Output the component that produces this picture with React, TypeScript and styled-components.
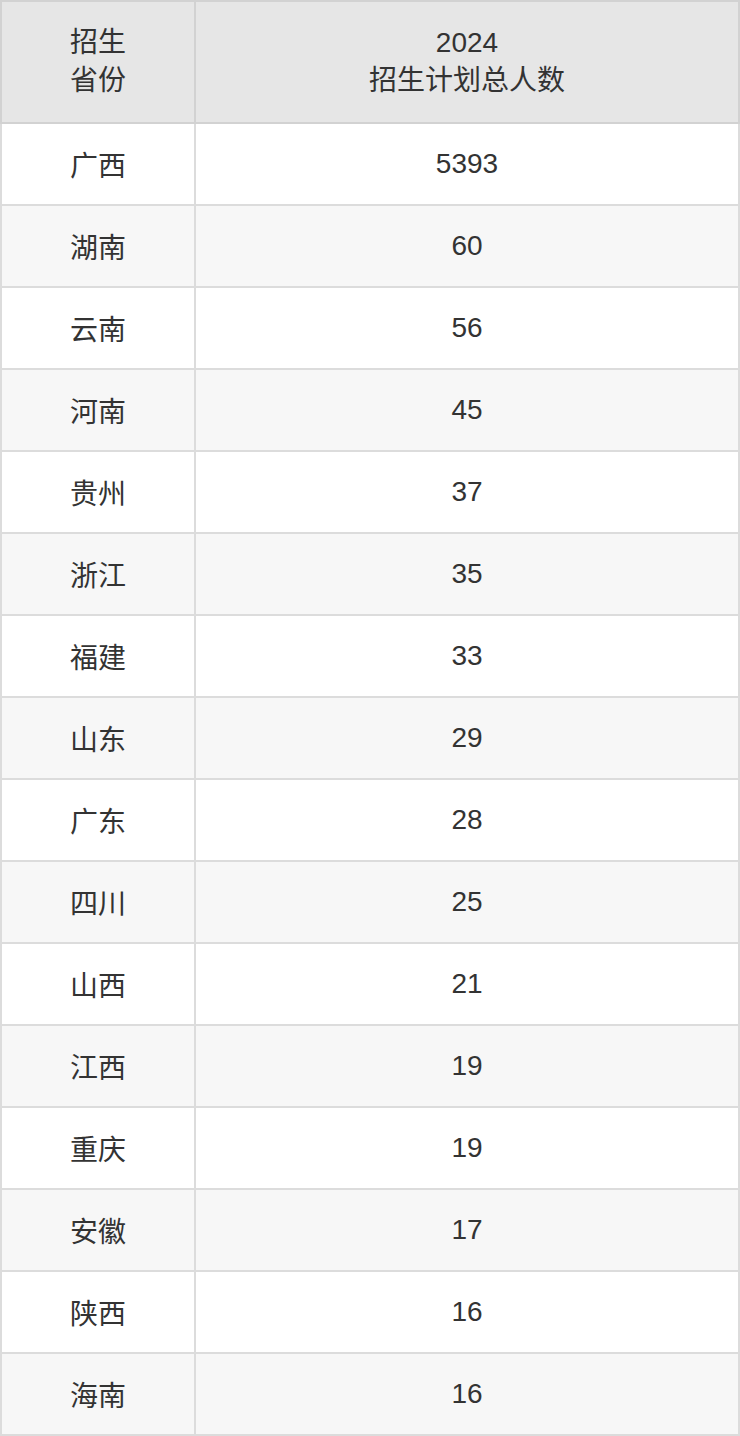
import React from "react";
import styled, { createGlobalStyle } from "styled-components";

const GlobalStyle = createGlobalStyle`
  html, body { margin: 0; padding: 0; background: #ffffff; }
  body {
    font-family: "Liberation Sans", "Noto Sans CJK SC", Arial, sans-serif;
    color: #333333;
    -webkit-font-smoothing: antialiased;
  }
`;

const Table = styled.div`
  width: 740px;
  display: flex;
  flex-direction: column;
`;

const HeaderRow = styled.div`
  display: grid;
  grid-template-columns: 192px 1fr;
  column-gap: 2px;
  padding: 2px;
  background: #d2d2d2;
`;

const HeaderCell = styled.div`
  height: 120px;
  background: #e6e6e6;
  display: flex;
  align-items: center;
  justify-content: center;
  text-align: center;
  font-size: 28px;
  line-height: 38px;
  color: #333333;
`;

const Row = styled.div`
  display: grid;
  grid-template-columns: 192px 1fr;
  column-gap: 2px;
  padding: 0 2px 2px 2px;
  background: #dcdcdc;
`;

const Cell = styled.div<{ $striped: boolean }>`
  height: 80px;
  background: ${(p) => (p.$striped ? "#f7f7f7" : "#ffffff")};
  display: flex;
  align-items: center;
  justify-content: center;
  font-size: 28px;
  color: #333333;
`;

const data: [string, number][] = [
  ["广西", 5393],
  ["湖南", 60],
  ["云南", 56],
  ["河南", 45],
  ["贵州", 37],
  ["浙江", 35],
  ["福建", 33],
  ["山东", 29],
  ["广东", 28],
  ["四川", 25],
  ["山西", 21],
  ["江西", 19],
  ["重庆", 19],
  ["安徽", 17],
  ["陕西", 16],
  ["海南", 16],
];

export default function App() {
  return (
    <>
      <GlobalStyle />
      <Table>
        <HeaderRow>
          <HeaderCell>
            招生
            <br />
            省份
          </HeaderCell>
          <HeaderCell>
            2024
            <br />
            招生计划总人数
          </HeaderCell>
        </HeaderRow>
        {data.map(([prov, n], i) => (
          <Row key={prov + i}>
            <Cell $striped={i % 2 === 1}>{prov}</Cell>
            <Cell $striped={i % 2 === 1}>{n}</Cell>
          </Row>
        ))}
      </Table>
    </>
  );
}
